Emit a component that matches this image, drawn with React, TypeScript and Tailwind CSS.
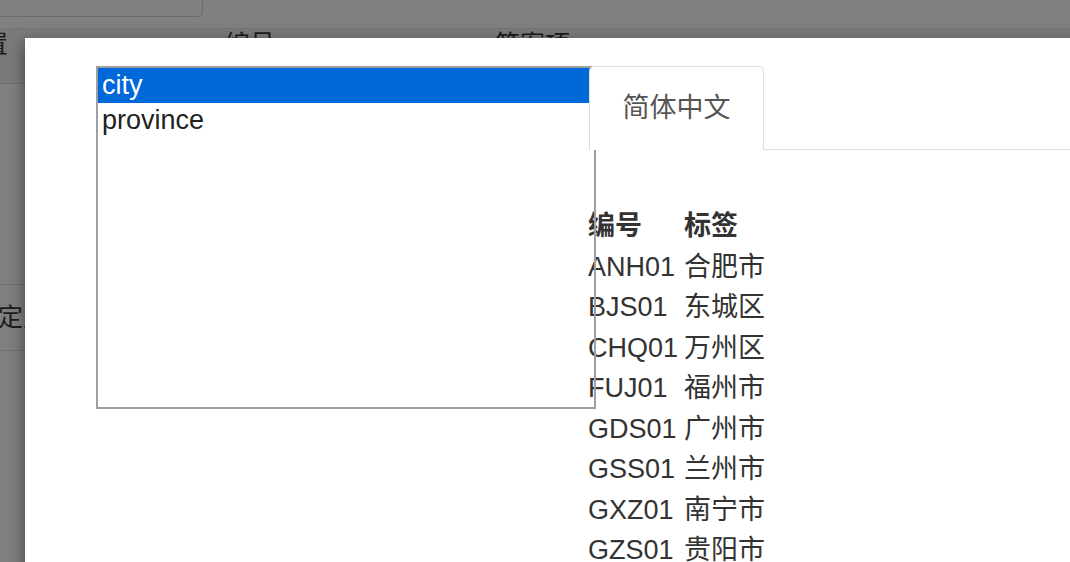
import React from "react";

const sans = "font-['Liberation_Sans','Noto_Sans_CJK_SC',sans-serif]";

const cities = [
  ["ANH01", "合肥市"],
  ["BJS01", "东城区"],
  ["CHQ01", "万州区"],
  ["FUJ01", "福州市"],
  ["GDS01", "广州市"],
  ["GSS01", "兰州市"],
  ["GXZ01", "南宁市"],
  ["GZS01", "贵阳市"],
];

const dictionaries = ["city", "province"];

function BackdropPage() {
  return (
    <div className="flex flex-col text-[25px] leading-none text-[#1c1c1c]">
      {/* search input, only its lower edge is on screen */}
      <div className="h-[28px]">
        <div className="h-[17px] w-[203px] rounded-br-[5px] border-b border-r border-[#6c6c6c]" />
      </div>
      {/* table header */}
      <div className="flex h-[55px] border-t border-[#757575] bg-[#7b7b7b] pt-[3px]">
        <div className="-ml-[42px] w-[267px] shrink-0">设置</div>
        <div className="w-[270px] shrink-0">编号</div>
        <div className="shrink-0">答案项</div>
      </div>
      <div className="h-[201px] border-t border-[#707070]" />
      <div className="flex h-[66px] items-center border-t border-[#707070]">
        <div className="-ml-[27px]">自定义</div>
      </div>
      <div className="h-[200px] border-t border-[#707070]" />
    </div>
  );
}

function DictionaryList() {
  return (
    <div className="relative h-[343px] w-[500px] shrink-0 border-2 border-[#9f9f9f]">
      {dictionaries.map((name, i) => (
        <div
          key={name}
          className={
            "flex h-[34.5px] items-center pl-[4px] text-[27px] " +
            (i === 0 ? "bg-[#0069d9] text-white" : "text-[#222]")
          }
        >
          {name}
        </div>
      ))}
    </div>
  );
}

function LabelPanel() {
  return (
    <div className="-ml-[8px] flex-1">
      <div className="flex border-b border-[#dddddd]">
        <div className="relative z-10 ml-px -mb-px h-[84px] w-[175px] rounded-t-[5px] border border-b-0 border-[#dddddd] bg-white pt-[22px] text-center text-[27px] leading-[38px] text-[#555]">
          简体中文
        </div>
      </div>
      <table className="mt-[56px] border-collapse text-[27px] text-[#333]">
        <thead>
          <tr className="h-[40px] text-left">
            <th className="w-[96px] p-0 font-semibold">编号</th>
            <th className="p-0 font-semibold">标签</th>
          </tr>
        </thead>
        <tbody>
          {cities.map(([code, label]) => (
            <tr key={code} className="h-[40px]">
              <td className="p-0">{code}</td>
              <td className="p-0">{label}</td>
            </tr>
          ))}
        </tbody>
      </table>
    </div>
  );
}

export default function App() {
  return (
    <div className={`relative h-[562px] w-[1070px] overflow-hidden bg-[#808080] ${sans}`}>
      <BackdropPage />
      <div className="absolute left-[25px] top-[38px] h-[600px] w-[1100px] bg-white shadow-[0_5px_15px_rgba(0,0,0,0.5)]">
        <div className="flex pl-[71px] pt-[28px]">
          <DictionaryList />
          <LabelPanel />
        </div>
      </div>
    </div>
  );
}
